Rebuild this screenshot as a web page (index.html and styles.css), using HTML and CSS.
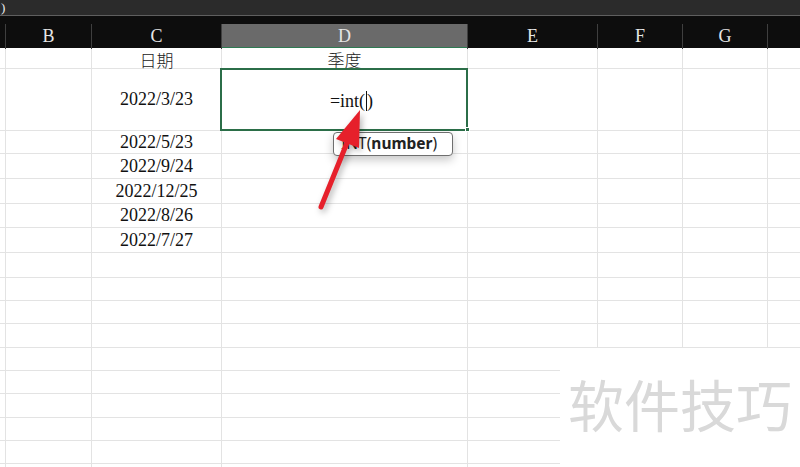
FILE: index.html
```html
<!DOCTYPE html>
<html lang="zh">
<head>
<meta charset="utf-8">
<title>Sheet</title>
<link rel="stylesheet" href="styles.css">
</head>
<body>
<div class="app">
  <div class="formula-bar"><span class="paren">)</span></div>
  <div class="col-headers">
    <div class="h"></div>
    <div class="h">B</div>
    <div class="h">C</div>
    <div class="h h-active">D</div>
    <div class="h">E</div>
    <div class="h">F</div>
    <div class="h">G</div>
    <div class="h"></div>
  </div>
  <div class="sheet">
    <div class="c"></div><div class="c"></div><div class="c cjk">日期</div><div class="c cjk">季度</div><div class="c"></div><div class="c"></div><div class="c"></div><div class="c"></div>
    <div class="c"></div><div class="c"></div><div class="c">2022/3/23</div><div class="c c-edit">=int(<span class="caret"></span>)<span class="sel"></span></div><div class="c"></div><div class="c"></div><div class="c"></div><div class="c"></div>
    <div class="c"></div><div class="c"></div><div class="c">2022/5/23</div><div class="c"></div><div class="c"></div><div class="c"></div><div class="c"></div><div class="c"></div>
    <div class="c"></div><div class="c"></div><div class="c">2022/9/24</div><div class="c"></div><div class="c"></div><div class="c"></div><div class="c"></div><div class="c"></div>
    <div class="c"></div><div class="c"></div><div class="c">2022/12/25</div><div class="c"></div><div class="c"></div><div class="c"></div><div class="c"></div><div class="c"></div>
    <div class="c"></div><div class="c"></div><div class="c">2022/8/26</div><div class="c"></div><div class="c"></div><div class="c"></div><div class="c"></div><div class="c"></div>
    <div class="c"></div><div class="c"></div><div class="c">2022/7/27</div><div class="c"></div><div class="c"></div><div class="c"></div><div class="c"></div><div class="c"></div>
    <div class="c"></div><div class="c"></div><div class="c"></div><div class="c"></div><div class="c"></div><div class="c"></div><div class="c"></div><div class="c"></div>
    <div class="c"></div><div class="c"></div><div class="c"></div><div class="c"></div><div class="c"></div><div class="c"></div><div class="c"></div><div class="c"></div>
    <div class="c"></div><div class="c"></div><div class="c"></div><div class="c"></div><div class="c"></div><div class="c"></div><div class="c"></div><div class="c"></div>
    <div class="c"></div><div class="c"></div><div class="c"></div><div class="c"></div><div class="c"></div><div class="c"></div><div class="c"></div><div class="c"></div>
    <div class="c"></div><div class="c"></div><div class="c"></div><div class="c"></div><div class="c"></div><div class="c"></div><div class="c"></div><div class="c"></div>
    <div class="c"></div><div class="c"></div><div class="c"></div><div class="c"></div><div class="c"></div><div class="c"></div><div class="c"></div><div class="c"></div>
    <div class="c"></div><div class="c"></div><div class="c"></div><div class="c"></div><div class="c"></div><div class="c"></div><div class="c"></div><div class="c"></div>
    <div class="c"></div><div class="c"></div><div class="c"></div><div class="c"></div><div class="c"></div><div class="c"></div><div class="c"></div><div class="c"></div>
    <div class="c"></div><div class="c"></div><div class="c"></div><div class="c"></div><div class="c"></div><div class="c"></div><div class="c"></div><div class="c"></div>
    <div class="c"></div><div class="c"></div><div class="c"></div><div class="c"></div><div class="c"></div><div class="c"></div><div class="c"></div><div class="c"></div>
  </div>

  <div class="fill-handle"></div>
  <div class="tooltip">INT(<b>number</b>)</div>
  <div class="watermark">软件技巧</div>

  <svg class="arrow" width="800" height="467" viewBox="0 0 800 467" aria-hidden="true">
    <g class="arrow-shape">
      <line x1="321" y1="207" x2="351" y2="133" stroke="#e6202b" stroke-width="5" stroke-linecap="round"/>
      <polygon points="360,110 359,148 336,139" fill="#e6202b"/>
    </g>
  </svg>
</div>
</body>
</html>
```

FILE: styles.css
```css
* { box-sizing: border-box; }
html, body { margin: 0; padding: 0; }
body {
  width: 800px;
  height: 467px;
  overflow: hidden;
  background: #ffffff;
  font-family: "Liberation Serif", "Noto Sans CJK SC", serif;
}
.app {
  position: relative;
  width: 800px;
  height: 467px;
  overflow: hidden;
}
.formula-bar {
  height: 16px;
  background: #2b2b2b;
  border-bottom: 1px solid #5f5f5f;
  color: #f0f0f0;
  font-size: 13px;
  line-height: 15px;
  padding-left: 1px;
}
.paren { display: inline-block; }

.col-headers {
  height: 32px;
  padding-top: 8px;
  background: #0d0d0d;
  display: grid;
  grid-template-columns: 5px 85px 129px 245px 129px 84px 84px 32px;
  column-gap: 1px;
}
.col-headers .h {
  background: #0d0d0d;
  color: #e6e6e6;
  font-size: 18px;
  display: flex;
  align-items: center;
  justify-content: center;
  box-shadow: -1px 0 0 #3f3f3f;
}
.col-headers .h:first-child { box-shadow: none; }
.col-headers .h-active {
  background: #6a6a6a;
  border-bottom: 2px solid #2e7a52;
  padding-top: 2px;
}

.sheet {
  display: grid;
  grid-template-columns: 5px 85px 129px 245px 129px 84px 84px 32px;
  grid-template-rows: 20px 61px 22px 24px 24px 23px 24px 24px 22px 22px 23px 22px 22px 23px 22px 22px 10px;
  gap: 1px;
  background: #e3e3e3;
}
.c {
  background: #ffffff;
  color: #111111;
  font-size: 18px;
  display: flex;
  align-items: center;
  justify-content: center;
  white-space: nowrap;
}
.c.cjk {
  font-family: "Noto Sans CJK SC", sans-serif;
  font-weight: 300;
  font-size: 17px;
  color: #222;
  padding-top: 2px;
}
.c-edit {
  position: relative;
  padding-left: 14px;
  padding-top: 3px;
}
.caret {
  display: inline-block;
  width: 1px;
  height: 20px;
  background: #111;
  margin: 0 0 0 1px;
  vertical-align: -5px;
}
.sel {
  position: absolute;
  top: -1px;
  left: -2px;
  right: -1px;
  bottom: -1px;
  border: 2px solid #2b6e48;
}
.fill-handle {
  position: absolute;
  left: 465px;
  top: 127px;
  width: 5px;
  height: 5px;
  background: #2b6e48;
  border: 1px solid #ffffff;
}
.tooltip {
  position: absolute;
  left: 333px;
  top: 132px;
  width: 120px;
  height: 24px;
  background: #ffffff;
  border: 1px solid #6f6f6f;
  border-radius: 4px;
  box-shadow: 0 4px 10px rgba(0, 0, 0, 0.22);
  font-family: "Noto Sans", "Open Sans", sans-serif;
  font-size: 15.5px;
  line-height: 21px;
  color: #222;
  padding-left: 7px;
  white-space: nowrap;
}
.tooltip b { font-weight: 700; }
.watermark {
  position: absolute;
  left: 560px;
  top: 348px;
  right: 0;
  bottom: 0;
  background: #ffffff;
  font-family: "Noto Sans CJK SC", sans-serif;
  font-size: 56px;
  line-height: 56px;
  color: #d9d9d9;
  padding: 27px 0 0 8px;
  white-space: nowrap;
}
.arrow {
  position: absolute;
  left: 0;
  top: 0;
  pointer-events: none;
}
.arrow-shape {
  filter: drop-shadow(2px 3px 3px rgba(0, 0, 0, 0.3));
}
```
